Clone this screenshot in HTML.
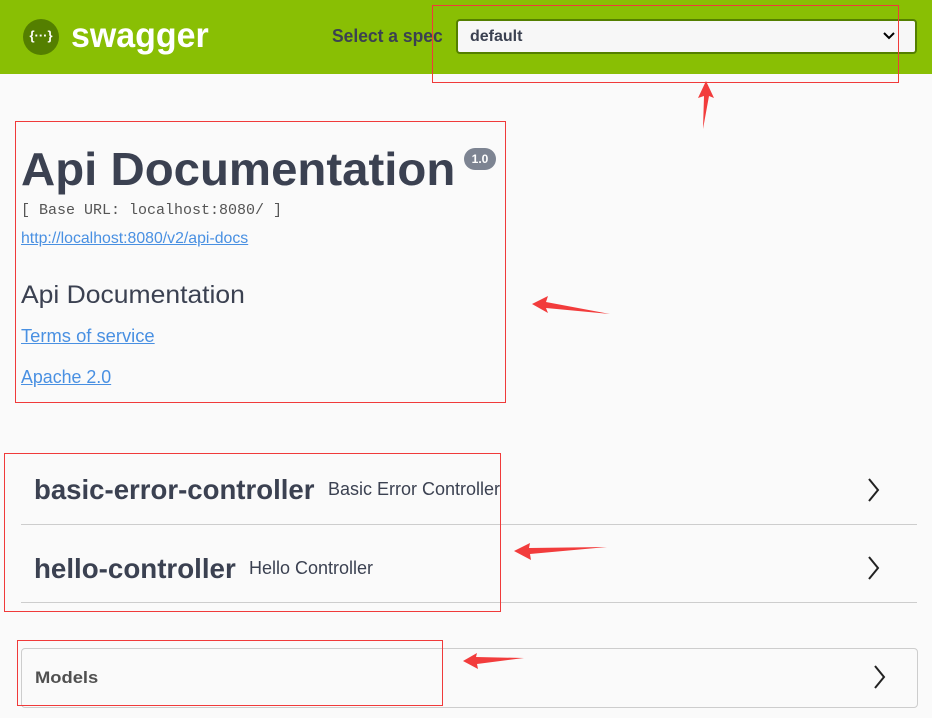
<!DOCTYPE html>
<html><head><meta charset="utf-8"><style>
body{margin:0;width:932px;height:718px;background:#fafafa;position:relative;overflow:hidden;font-family:"Liberation Sans",sans-serif;color:#3b4151}
.a{position:absolute;white-space:nowrap}
.sx{display:inline-block;transform-origin:0 0}
.box{position:absolute;border:1px solid #f03a3a}
a{color:#4990e2}
a .sx{text-decoration:underline}
</style></head><body>
<div class="a" style="left:0;top:0;width:932px;height:74px;background:#89bf04"></div>
<div class="a" style="left:23px;top:19px;width:36px;height:36px;border-radius:50%;background:#547f00;color:#fff;font:bold 13px 'Liberation Sans';text-align:center;line-height:34px">{···}</div>
<div class="a" style="left:71px;top:16px;font:bold 35px 'Liberation Sans';color:#fff"><span class="sx" style="transform:scaleX(0.97)">swagger</span></div>
<div class="a" style="left:332px;top:26px;font:bold 18px 'Liberation Sans';color:#3b4151"><span class="sx" style="transform:scaleX(0.97)">Select a spec</span></div>
<div class="a" style="left:456px;top:19px;width:457px;height:31px;border:2px solid #547f00;border-radius:4px;background:#f7f7f7"></div>
<div class="a" style="left:470px;top:28px;font:bold 16px 'Liberation Sans';color:#3b4151">default</div>
<svg class="a" style="left:882px;top:31px" width="14" height="10"><path d="M2 2 L7 7 L12 2" stroke="#000" stroke-width="2" fill="none"/></svg>

<div class="a" style="left:21px;top:142px;font:bold 46px 'Liberation Sans'"><span class="sx" style="transform:scaleX(1.03)">Api Documentation</span></div>
<div class="a" style="left:464px;top:148px;width:32px;height:22px;border-radius:11px;background:#7d8492;color:#fff;font:bold 12px 'Liberation Sans';text-align:center;line-height:22px">1.0</div>
<div class="a" style="left:21px;top:202px;font:15px 'Liberation Mono';color:#555">[ Base URL: localhost:8080/ ]</div>
<div class="a" style="left:21px;top:230px;font:16px 'Liberation Sans'"><a href="#"><span class="sx" style="transform:scaleX(0.99)">http://localhost:8080/v2/api-docs</span></a></div>
<div class="a" style="left:21px;top:281px;font:25px 'Liberation Sans'"><span class="sx" style="transform:scaleX(1.06)">Api Documentation</span></div>
<div class="a" style="left:21px;top:326px;font:18px 'Liberation Sans'"><a href="#"><span class="sx" style="transform:scaleX(1.02)">Terms of service</span></a></div>
<div class="a" style="left:21px;top:367px;font:18px 'Liberation Sans'"><a href="#"><span class="sx" style="transform:scaleX(0.99)">Apache 2.0</span></a></div>

<div class="a" style="left:34px;top:474px;font:bold 28px 'Liberation Sans'"><span class="sx" style="transform:scaleX(0.985)">basic-error-controller</span></div>
<div class="a" style="left:328px;top:479px;font:18px 'Liberation Sans'">Basic Error Controller</div>
<div class="a" style="left:21px;top:524px;width:896px;height:1px;background:#cdcdcd"></div>
<div class="a" style="left:34px;top:553px;font:bold 28px 'Liberation Sans'"><span class="sx" style="transform:scaleX(0.99)">hello-controller</span></div>
<div class="a" style="left:249px;top:558px;font:18px 'Liberation Sans'">Hello Controller</div>
<div class="a" style="left:21px;top:602px;width:896px;height:1px;background:#cdcdcd"></div>
<svg class="a" style="left:866px;top:477px" width="16" height="26"><path d="M3 2 L12 13 L3 24" stroke="#222" stroke-width="2" fill="none"/></svg>
<svg class="a" style="left:866px;top:555px" width="16" height="26"><path d="M3 2 L12 13 L3 24" stroke="#222" stroke-width="2" fill="none"/></svg>

<div class="a" style="left:21px;top:648px;width:895px;height:58px;border:1px solid #cdcdcd;border-radius:4px"></div>
<div class="a" style="left:35px;top:668px;font:bold 17px 'Liberation Sans';color:#505050"><span class="sx" style="transform:scaleX(1.08)">Models</span></div>
<svg class="a" style="left:872px;top:664px" width="16" height="26"><path d="M3 2 L12 13 L3 24" stroke="#222" stroke-width="2" fill="none"/></svg>

<div class="box" style="left:432px;top:5px;width:465px;height:76px"></div>
<div class="box" style="left:15px;top:121px;width:489px;height:280px"></div>
<div class="box" style="left:4px;top:453px;width:495px;height:157px"></div>
<div class="box" style="left:17px;top:640px;width:424px;height:64px"></div>

<svg class="a" style="left:0;top:0" width="932" height="718">
<g fill="#f23c3c">
<polygon points="706,81 714,98 709,96 703,129 704,96 698,98"/>
<polygon points="532,304 548,296 546,302 610,314 546,308 548,313"/>
<polygon points="514,551 530,543 529,548 607,547 530,554 531,560"/>
<polygon points="463,661 477,653 476,657 524,658 477,664 478,669"/>
</g></svg>
</body></html>
